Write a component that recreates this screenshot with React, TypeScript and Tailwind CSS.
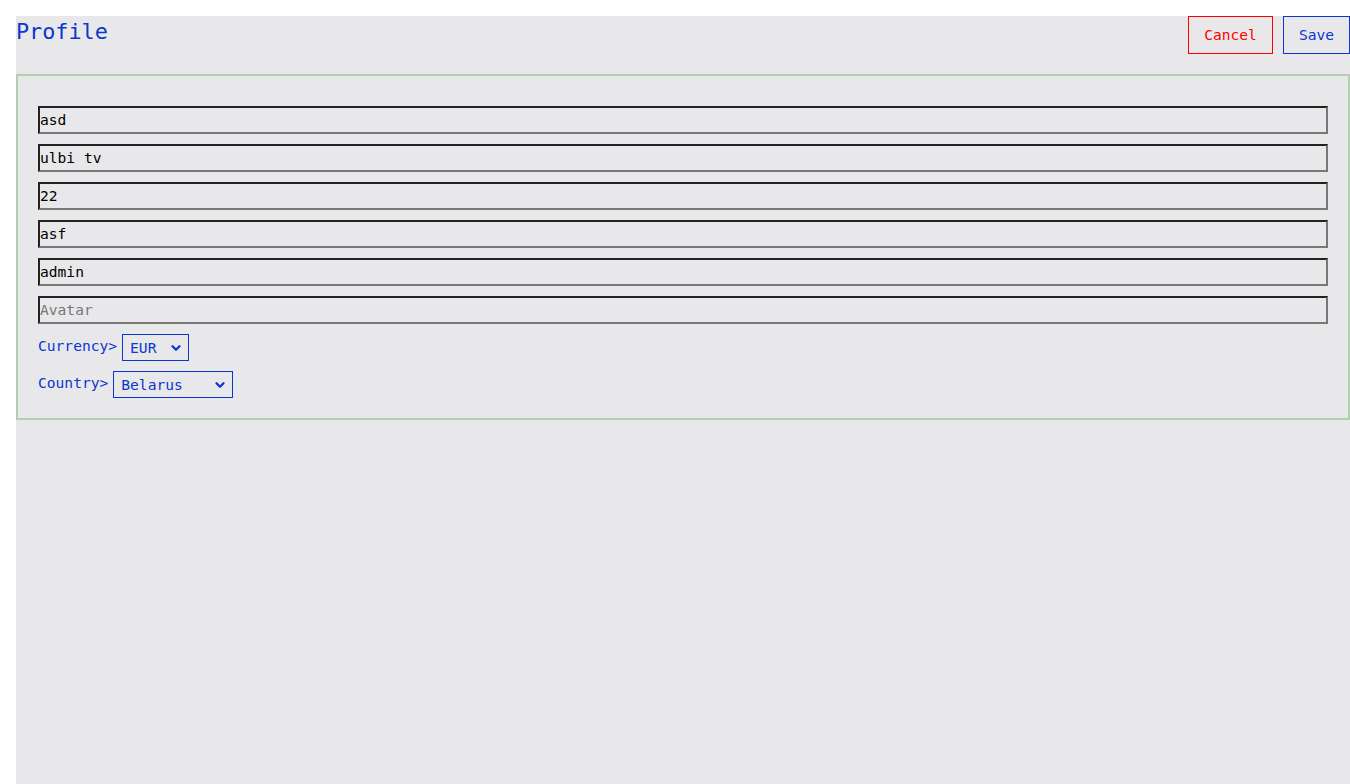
import { ChevronDown } from "lucide-react";

const mono = "font-['DejaVu_Sans_Mono',_'Liberation_Mono',_monospace]";

const fields = [
  { value: "asd", placeholder: "Firstname" },
  { value: "ulbi tv", placeholder: "Lastname" },
  { value: "22", placeholder: "Age" },
  { value: "asf", placeholder: "City" },
  { value: "admin", placeholder: "Username" },
  { value: "", placeholder: "Avatar" },
];

function Select({ label, value, width }: { label: string; value: string; width: string }) {
  return (
    <label className="flex items-center gap-[5px] text-[#0b36cf]">
      <span className="-mt-[4px]">{label}</span>
      <span className={`relative flex h-[27px] items-center border border-[#0b36cf] ${width}`}>
        <span className="pl-[7px] pt-[1px]">{value}</span>
        <ChevronDown size={14} strokeWidth={4} className="absolute right-[5px] top-[6px]" />
      </span>
    </label>
  );
}

export default function App() {
  return (
    <div className={`min-h-[784px] bg-white pl-4 pt-4 ${mono} text-[14.6px]`}>
      <div className="min-h-[768px] bg-[#e8e8ea]">
        {/* header */}
        <div className="flex items-start justify-between">
          <h1 className="pt-[3px] text-[21.8px] leading-[26px] text-[#0b36cf]">Profile</h1>
          <div className="flex gap-[10px]">
            <button className="h-[38px] w-[85px] border border-[#ff0000] text-[#ff0000]">Cancel</button>
            <button className="h-[38px] w-[67px] border border-[#0b36cf] text-[#0b36cf]">Save</button>
          </div>
        </div>

        {/* card */}
        <div className="mt-[20px] border-2 border-[#b0d0b0] px-[20px] pb-[20px] pt-[30px]">
          <div className="flex flex-col gap-[10px]">
            {fields.map((f) => (
              <input
                key={f.placeholder}
                defaultValue={f.value}
                placeholder={f.placeholder}
                className="h-[28px] border-2 border-b-[#777] border-l-[#222] border-r-[#777] border-t-[#222] bg-transparent pb-[2px] pl-0 text-black outline-none placeholder:text-[#777]"
              />
            ))}
            <Select label="Currency>" value="EUR" width="w-[67px]" />
            <Select label="Country>" value="Belarus" width="w-[120px]" />
          </div>
        </div>
      </div>
    </div>
  );
}
